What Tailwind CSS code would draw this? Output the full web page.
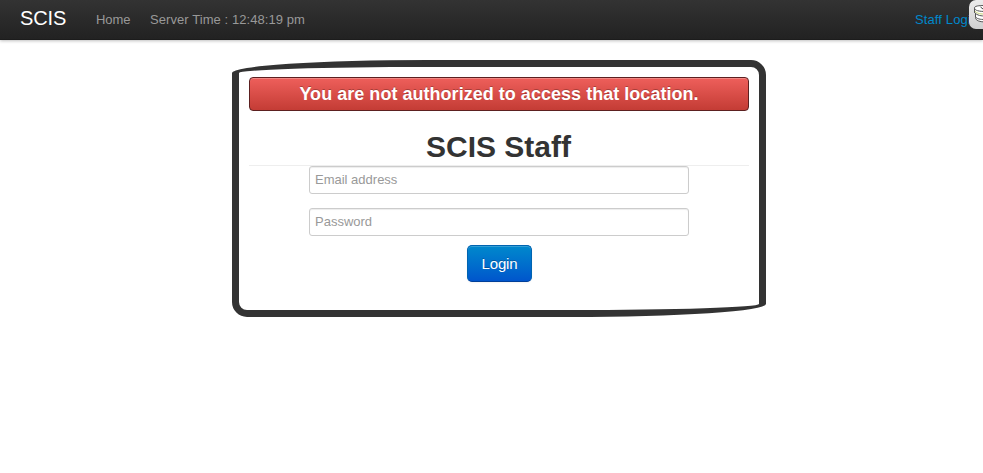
<!DOCTYPE html>
<html lang="en">
<head>
<meta charset="utf-8">
<title>SCIS Staff</title>
<script src="https://cdn.jsdelivr.net/npm/@tailwindcss/browser@4"></script>
</head>
<body class="relative min-h-screen overflow-hidden bg-white font-['Liberation_Sans',Arial,sans-serif] text-[13px] leading-5 text-[#333]">
<nav class="flex h-10 items-start border-b border-[#1c1c1c] bg-linear-to-b from-[#333] to-[#222] pt-[10px] whitespace-nowrap shadow-[0_1px_3px_rgba(0,0,0,0.25)]">
  <a class="ml-5 w-[76px] text-[20px] leading-4 tracking-[-0.1px] text-white">SCIS</a>
  <a class="w-[54px] tracking-[-0.1px] text-[#999]">Home</a>
  <span class="tracking-[0.07px] text-[#999]">Server Time : 12:48:19 pm</span>
  <a class="ml-auto w-[68px] tracking-[0.12px] text-[#0088cc]">Staff Login</a>
</nav>
<div class="absolute top-0 left-[969px] h-[29px] w-[34px] rounded-[7px] bg-linear-to-b from-[#ececec] to-[#cfcfcf]">
  <svg class="h-[29px] w-[34px]" viewBox="0 0 34 29" fill="none">
    <path d="M5.500 8v4.500l1 1v4c0 3 4 4.500 11 4.500V8z" fill="#fff" stroke="#555"/>
    <path d="M5.500 12c1 2.500 5 4 10 4M6.500 16.500c1 2.500 5 3 9 3" stroke="#555"/>
    <path d="M6 11c1.500 2 4 3 9 3" stroke="#b9c94c" stroke-width=".8"/>
    <path d="M5.500 8C5.500 6 9 5.500 17 5.500v6c-7 0-11.500-1-11.500-3.500z" fill="#fff" stroke="#555"/>
    <path d="M11.500 7l2.500 2" stroke="#444"/>
  </svg>
</div>
<main class="mt-5 ml-[232px] h-[257px] w-[534px] rounded-tl-[195px_13px] rounded-tr-[15px] rounded-br-[195px_13px] rounded-bl-[15px] border-[7px] border-[#333] p-[10px] text-center">
  <div class="h-[34px] rounded-[4px] border border-[#5c2020] bg-linear-to-b from-[#ee5f5b] to-[#c43c35] text-[18px] leading-8 font-bold tracking-[0.03px] text-white shadow-[inset_0_1px_0_rgba(255,255,255,0.25)] [text-shadow:0_-1px_0_rgba(0,0,0,0.25)]">You are not authorized to access that location.</div>
  <h1 class="mt-4 h-[39px] border-b border-[#eee] pr-px text-[30px] leading-[40px] font-bold">SCIS Staff</h1>
  <form class="flex flex-col items-center">
    <input class="h-7 w-[380px] rounded-[3px] border border-[#ccc] px-[5px] pb-[2px] text-[13px] shadow-[inset_0_1px_1px_rgba(0,0,0,0.075)] placeholder:text-[#999]" type="text" placeholder="Email address">
    <input class="mt-[14px] h-7 w-[380px] rounded-[3px] border border-[#ccc] px-[5px] pb-[2px] text-[13px] shadow-[inset_0_1px_1px_rgba(0,0,0,0.075)] placeholder:text-[#999]" type="password" placeholder="Password">
    <button type="button" class="mt-[9px] h-[37px] w-[65px] rounded-[5px] border border-[#0064b0] border-b-[#003f99] bg-[#0055cc] bg-linear-to-b from-[#0088cc] to-[#0055cc] pl-px text-[15px] tracking-[-0.1px] text-white shadow-[inset_0_1px_0_rgba(255,255,255,0.2),0_1px_2px_rgba(0,0,0,0.05)] [text-shadow:0_-1px_0_rgba(0,0,0,0.25)]">Login</button>
  </form>
</main>
</body>
</html>
